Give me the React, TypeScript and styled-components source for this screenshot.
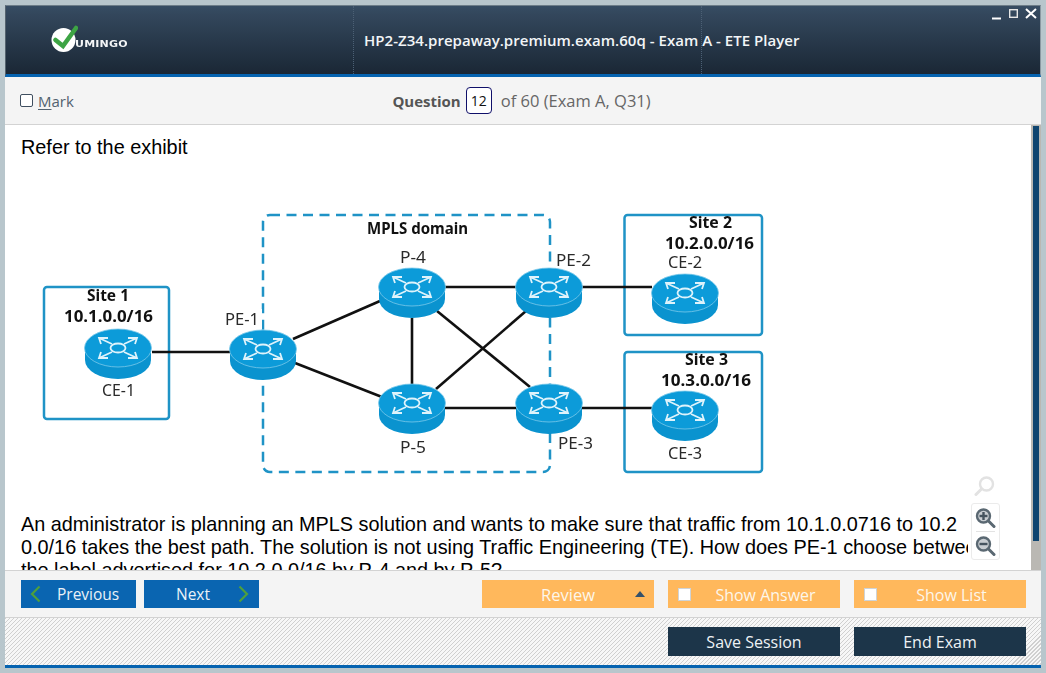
import React from "react";
import styled, { createGlobalStyle } from "styled-components";

const Global = createGlobalStyle`
  html, body { margin: 0; padding: 0; background: #b8c6cc; }
  * { box-sizing: border-box; }
  body { font-family: "Open Sans", "Noto Sans", sans-serif; }
`;

const Page = styled.div`
  width: 1046px;
  height: 673px;
  padding: 5px 5px 5px 5px;
  overflow: hidden;
`;
const Frame = styled.div`
  position: relative;
  height: 663px;
  display: flex;
  flex-direction: column;
  background: #f4f4f4;
`;
const Header = styled.header`
  height: 72px;
  flex: none;
  display: flex;
  border-top: 1px solid #6d7d88;
  border-left: 1px solid #55636e;
  border-right: 1px solid #8b99a2;
  border-bottom: 3px solid #0563b0;
  background: linear-gradient(#374d63, #33475c 12%, #1a2735);
`;
const LogoCell = styled.div`
  width: 347px;
  flex: none;
  padding: 15px 0 0 44px;
`;
const Logo = styled.div`
  display: flex;
  align-items: flex-end;
  height: 34px;
`;
const LogoWord = styled.span`
  font-family: "DejaVu Sans", sans-serif;
  font-weight: 700;
  font-size: 11px;
  line-height: 10px;
  letter-spacing: 0.2px;
  color: #f4f6f7;
  margin: 0 0 6px -3px;
  display: inline-block;
  transform: scaleY(0.85);
`;
const TitleCell = styled.div`
  width: 349px;
  flex: none;
  padding-left: 10px;
  border-left: 1px dotted #4c6075;
  border-right: 1px dotted #4c6075;
  display: flex;
  align-items: center;
`;
const Title = styled.h1`
  margin: -1px 0 0;
  font-size: 15px;
  font-weight: 600;
  letter-spacing: 0.03px;
  color: #f2f5f7;
  white-space: nowrap;
`;
const WindowControls = styled.svg`
  position: absolute;
  top: 3px;
  right: 3px;
  display: block;
`;
const Toolbar = styled.div`
  height: 48px;
  flex: none;
  display: grid;
  grid-template-columns: 1fr auto 1fr;
  align-items: center;
  padding: 0 18px 0 15px;
  border-bottom: 1px solid #d3d3d3;
  background: #f4f4f4;
`;
const MarkLabel = styled.label`
  display: flex;
  align-items: center;
  gap: 5px;
  font-size: 15px;
  color: #52626f;
`;
const MarkBox = styled.span`
  width: 13px;
  height: 13px;
  border: 1px solid #3f4f60;
  border-radius: 2px;
  background: #fff;
`;
const Hotkey = styled.u`
  text-decoration-thickness: 1px;
  text-underline-offset: 2px;
`;
const Counter = styled.div`
  display: flex;
  align-items: center;
  font-size: 16.5px;
  color: #666;
`;
const CounterLead = styled.strong`
  font-weight: 700;
  color: #555;
  font-size: 15px;
`;
const CounterBox = styled.span`
  width: 26px;
  height: 27px;
  margin: 0 9px 0 5px;
  display: flex;
  align-items: center;
  justify-content: center;
  border: 1px solid #10106a;
  border-radius: 4px;
  background: #fff;
  color: #111;
  font-size: 14px;
`;
const Main = styled.main`
  position: relative;
  height: 445px;
  flex: none;
  display: flex;
  background: #fff;
`;
const Content = styled.div`
  flex: 1;
  min-width: 0;
  overflow: hidden;
  padding: 11px 0 0 16px;
  font-family: "Liberation Sans", Arial, sans-serif;
  font-size: 19.85px;
  line-height: 23px;
  color: #000;
`;
const Para = styled.p`
  margin: 0;
`;
const Lines = styled.p`
  width: 947px;
  margin: 0;
  overflow: hidden;
  white-space: nowrap;
`;
const Line = styled.span`
  display: block;
`;
const Diagram = styled.svg`
  display: block;
  margin: 46px 0 33px 0;
  filter: blur(0.4px);
`;
const DiagramText = styled.text<{ $bold?: boolean }>`
  font-family: "Noto Sans", sans-serif;
  font-size: 16px;
  font-weight: ${(p) => (p.$bold ? 700 : 400)};
  fill: ${(p) => (p.$bold ? "#111" : "#2a2a2a")};
`;
const Track = styled.div`
  width: 10px;
  flex: none;
  padding: 1px 2px 29px;
  background: #bab8b3;
`;
const Thumb = styled.div`
  height: 100%;
  background: #0f4570;
`;
const ZoomDock = styled.div`
  position: absolute;
  left: 965px;
  top: 350px;
  width: 30px;
  display: flex;
  flex-direction: column;
  align-items: center;
`;
const ZoomPanel = styled.div`
  width: 29px;
  height: 57px;
  margin-top: 6px;
  background: #fff;
  border: 1px solid #ebebeb;
  border-radius: 3px;
  display: flex;
  flex-direction: column;
  align-items: center;
`;
const ZoomButton = styled.div`
  height: 28px;
  width: 100%;
  display: flex;
  align-items: center;
  justify-content: center;
`;
const ZoomRule = styled.div`
  width: 19px;
  height: 1px;
  flex: none;
  background: #e3e3e3;
`;
const NavBar = styled.div`
  height: 48px;
  flex: none;
  display: flex;
  justify-content: space-between;
  align-items: center;
  padding: 0 15px 0 16px;
  border-top: 1px solid #d3d3d3;
  border-bottom: 1px solid #d3d3d3;
  background: #f4f4f4;
`;
const Group = styled.div<{ $gap: number }>`
  display: flex;
  gap: ${(p) => p.$gap}px;
`;
const BaseButton = styled.div`
  height: 28px;
  display: flex;
  align-items: center;
  font-size: 16px;
  color: #fff;
  white-space: nowrap;
`;
const NavButton = styled(BaseButton)`
  width: 115px;
  justify-content: space-between;
  padding: 0 10px 0 9px;
  font-size: 15.5px;
  background: #0a65b1;
  color: #e9f1f8;
`;
const NavLabel = styled.span<{ $offset: number }>`
  margin-left: ${(p) => p.$offset}px;
  margin-right: auto;
`;
const ActionButton = styled(BaseButton)`
  position: relative;
  width: 172px;
  padding-left: 10px;
  background: #ffb85c;
  color: #fdf6ea;
`;
const ActionLabel = styled.span`
  flex: 1;
  padding-top: 2px;
  text-align: center;
`;
const ActionCheck = styled.span`
  width: 13px;
  height: 13px;
  flex: none;
  background: #fff;
  border: 1px solid #cfd3d6;
`;
const ReviewLabel = styled.span`
  flex: 1;
  margin-left: -10px;
  text-align: center;
  font-size: 16.5px;
`;
const Caret = styled.span`
  position: absolute;
  right: 9px;
  top: 11px;
  width: 0;
  height: 0;
  border-left: 5px solid transparent;
  border-right: 5px solid transparent;
  border-bottom: 6px solid #33506a;
`;
const Footer = styled.div`
  height: 47px;
  flex: none;
  display: flex;
  justify-content: flex-end;
  align-items: flex-start;
  gap: 14px;
  padding: 9px 15px 0 0;
  background: repeating-linear-gradient(135deg, #d0d0d0 0 1px, #f7f7f7 1px 2.83px);
`;
const SessionButton = styled(BaseButton)`
  width: 172px;
  height: 29px;
  justify-content: center;
  background: #1c3549;
  color: #eef2f5;
`;
const BottomRule = styled.div`
  height: 3px;
  flex: none;
  background: #0563b0;
`;
const GhostIcon = styled.span`
  display: flex;
  transform: scaleX(-1);
`;

const BLUE = "#0c9bd9";

const Router = ({ x, y }: { x: number; y: number }) => (
  <g transform={`translate(${x} ${y})`}>
    <path d="M-33 0V12A33 19 0 0 0 33 12V0Z" fill="#0a93cf" />
    <ellipse rx="33.5" ry="19" fill={BLUE} stroke="#7cc9ea" strokeWidth="0.8" />
    <g fill="none" stroke="#dff3fb" strokeWidth="1.8">
      <ellipse rx="7.5" ry="4.5" />
      <path d="M-6-4-19-10M-10-10H-19L-17-4" />
      <path d="M6-4 19-10M10-10H19L17-4" />
      <path d="M-6 4-19 10M-10 10H-19L-17 4" />
      <path d="M6 4 19 10M10 10H19L17 4" />
    </g>
  </g>
);

const links = [
  "M152 352H230",
  "M293 339 380 301",
  "M295 363 382 397",
  "M445 287H516",
  "M412 318V385",
  "M437 311 530 387",
  "M436 389 526 311",
  "M445 408H516",
  "M581 287H652",
  "M581 408H652",
];
const routers = [
  [118, 348],
  [263, 349],
  [412, 287],
  [549, 287],
  [685, 293],
  [412, 403],
  [549, 403],
  [685, 410],
];
const labels: { t: string; x: number; y: number; w: number; bold?: boolean }[] = [
  { t: "Site 1", x: 87, y: 301, w: 42, bold: true },
  { t: "10.1.0.0/16", x: 64, y: 322, w: 89, bold: true },
  { t: "CE-1", x: 102, y: 396, w: 33 },
  { t: "PE-1", x: 225, y: 325, w: 34 },
  { t: "MPLS domain", x: 367, y: 234, w: 101, bold: true },
  { t: "P-4", x: 400, y: 263, w: 26 },
  { t: "PE-2", x: 556, y: 266, w: 35 },
  { t: "P-5", x: 400, y: 453, w: 26 },
  { t: "PE-3", x: 558, y: 449, w: 35 },
  { t: "Site 2", x: 689, y: 228, w: 43, bold: true },
  { t: "10.2.0.0/16", x: 665, y: 249, w: 89, bold: true },
  { t: "CE-2", x: 668, y: 268, w: 34 },
  { t: "Site 3", x: 685, y: 365, w: 43, bold: true },
  { t: "10.3.0.0/16", x: 661, y: 386, w: 90, bold: true },
  { t: "CE-3", x: 668, y: 459, w: 34 },
];

const Magnifier = ({ sign, color }: { sign?: "plus" | "minus"; color: string }) => (
  <svg width="22" height="22" viewBox="0 0 22 22">
    <circle cx="9.5" cy="9" r="6.5" fill={sign ? "#c9ced2" : "#fff"} stroke={color} strokeWidth="2.4" />
    <path d="M14.5 14 20 19.5" stroke={color} strokeWidth="3" strokeLinecap="round" />
    {sign && <path d="M5.5 9H13.5" stroke="#46545f" strokeWidth="2.4" />}
    {sign === "plus" && <path d="M9.5 5V13" stroke="#46545f" strokeWidth="2.4" />}
  </svg>
);

export default function App() {
  return (
    <Page>
      <Global />
      <Frame>
        <Header>
          <LogoCell>
            <Logo>
              <svg width="28" height="34" viewBox="0 0 28 34">
                <circle cx="13.5" cy="19" r="12" fill="#fff" />
                <path d="M5.5 19 13 25 26 7" fill="none" stroke="#3da444" strokeWidth="4.5" strokeLinecap="round" strokeLinejoin="miter" />
              </svg>
              <LogoWord>UMINGO</LogoWord>
            </Logo>
          </LogoCell>
          <TitleCell>
            <Title>HP2-Z34.prepaway.premium.exam.60q - Exam A - ETE Player</Title>
          </TitleCell>
        </Header>
        <WindowControls width="46" height="14" viewBox="0 0 46 14">
          <path d="M0 10.5H9" stroke="#fff" strokeWidth="2" />
          <rect x="17.7" y="1.7" width="7.6" height="7.6" fill="none" stroke="#e6e6e6" strokeWidth="1.4" />
          <path d="M34 1 44 10M44 1 34 10" stroke="#fff" strokeWidth="2" />
        </WindowControls>
        <Toolbar>
          <MarkLabel>
            <MarkBox />
            <span>
              <Hotkey>M</Hotkey>ark
            </span>
          </MarkLabel>
          <Counter>
            <CounterLead>Question</CounterLead>
            <CounterBox>12</CounterBox>
            of 60 (Exam A, Q31)
          </Counter>
        </Toolbar>
        <Main>
          <Content>
            <Para>Refer to the exhibit</Para>
            <Diagram width="760" height="275" viewBox="21 205 760 275">
              <g fill="none" stroke="#1f93c6" strokeWidth="2.5">
                <rect x="44" y="287" width="125" height="132" rx="3" />
                <rect x="624.5" y="215" width="137.5" height="120" rx="3" />
                <rect x="624.5" y="352" width="137.5" height="120" rx="3" />
                <rect x="263" y="215" width="287" height="257" rx="7" strokeDasharray="10 6.5" />
              </g>
              <rect x="222" y="309" width="40" height="20" fill="#fff" />
              <g fill="none" stroke="#111" strokeWidth="2.6">
                {links.map((d) => (
                  <path key={d} d={d} />
                ))}
              </g>
              {routers.map(([x, y]) => (
                <Router key={`${x}-${y}`} x={x} y={y} />
              ))}
              {labels.map((l) => (
                <DiagramText key={l.t} x={l.x} y={l.y} $bold={l.bold} textLength={l.w} lengthAdjust="spacingAndGlyphs">
                  {l.t}
                </DiagramText>
              ))}
            </Diagram>
            <Lines>
              <Line>An administrator is planning an MPLS solution and wants to make sure that traffic from 10.1.0.0716 to 10.2</Line>
              <Line>0.0/16 takes the best path. The solution is not using Traffic Engineering (TE). How does PE-1 choose between</Line>
              <Line>the label advertised for 10.2.0.0/16 by P-4 and by P-5?</Line>
            </Lines>
          </Content>
          <Track>
            <Thumb />
          </Track>
          <ZoomDock>
            <GhostIcon>
              <Magnifier color="#e2e2e2" />
            </GhostIcon>
            <ZoomPanel>
              <ZoomButton>
                <Magnifier sign="plus" color="#5a6872" />
              </ZoomButton>
              <ZoomRule />
              <ZoomButton>
                <Magnifier sign="minus" color="#5a6872" />
              </ZoomButton>
            </ZoomPanel>
          </ZoomDock>
        </Main>
        <NavBar>
          <Group $gap={8}>
            <NavButton>
              <svg width="11" height="18" viewBox="0 0 11 18">
                <path d="M9.5 1.5 2 9l7.5 7.5" fill="none" stroke="#4e9f3d" strokeWidth="2.2" />
              </svg>
              <NavLabel $offset={16}>Previous</NavLabel>
            </NavButton>
            <NavButton>
              <NavLabel $offset={23}>Next</NavLabel>
              <svg width="11" height="18" viewBox="0 0 11 18">
                <path d="M1.5 1.5 9 9l-7.5 7.5" fill="none" stroke="#4e9f3d" strokeWidth="2.2" />
              </svg>
            </NavButton>
          </Group>
          <Group $gap={14}>
            <ActionButton>
              <ReviewLabel>Review</ReviewLabel>
              <Caret />
            </ActionButton>
            <ActionButton>
              <ActionCheck />
              <ActionLabel>Show Answer</ActionLabel>
            </ActionButton>
            <ActionButton>
              <ActionCheck />
              <ActionLabel>Show List</ActionLabel>
            </ActionButton>
          </Group>
        </NavBar>
        <Footer>
          <SessionButton>Save Session</SessionButton>
          <SessionButton>End Exam</SessionButton>
        </Footer>
        <BottomRule />
      </Frame>
    </Page>
  );
}
